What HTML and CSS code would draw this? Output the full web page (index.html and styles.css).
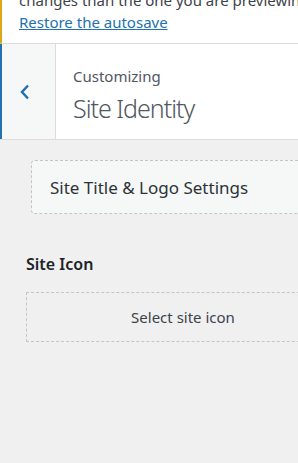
FILE: index.html
```html
<!DOCTYPE html>
<html>
<head>
<meta charset="utf-8">
<link rel="stylesheet" href="styles.css">
</head>
<body>
<div class="pane">
  <div class="notice">
    <p class="notice-text">changes than the one you are previewing.</p>
    <a class="notice-link" href="#">Restore the autosave</a>
  </div>
  <div class="header">
    <button class="back" aria-label="Back">
      <svg width="12" height="16" viewBox="0 0 12 16"><path d="M9 1.5 L3 8 L9 14.5" fill="none" stroke="#2271b1" stroke-width="2.5"/></svg>
    </button>
    <div class="title-wrap">
      <span class="eyebrow">Customizing</span>
      <h3 class="title">Site Identity</h3>
    </div>
  </div>
  <div class="content">
    <button class="logo-btn">Site Title &amp; Logo Settings</button>
    <h4 class="section-label">Site Icon</h4>
    <button class="select-btn">Select site icon</button>
  </div>
</div>
</body>
</html>
```
FILE: styles.css
```css
html, body {
  margin: 0;
  padding: 0;
  background: #f0f0f1;
  overflow: hidden;
}
body {
  width: 298px;
  height: 463px;
  font-family: "Noto Sans", "Open Sans", sans-serif;
}
.pane {
  width: 340px;
}
.notice {
  background: #fff;
  border-left: 2px solid #dba617;
  border-bottom: 1px solid #dcdcde;
  padding: 0 0 0 17px;
  margin-top: -10px;
  height: 54px;
  box-sizing: border-box;
  overflow: hidden;
}
.notice-text {
  margin: 0;
  font-size: 15px;
  line-height: 21px;
  color: #3c434a;
  white-space: nowrap;
}
.notice-link {
  display: inline-block;
  font-size: 15px;
  line-height: 21px;
  color: #2271b1;
  text-decoration: underline;
}
.header {
  display: flex;
  background: #fff;
  border-bottom: 1px solid #dcdcde;
  height: 96px;
  box-sizing: border-box;
}
.back {
  width: 56px;
  background: #f6f7f7;
  border: none;
  border-left: 2px solid #2271b1;
  border-right: 1px solid #dcdcde;
  padding: 0 7px 0 0;
  display: flex;
  align-items: center;
  justify-content: center;
}
.title-wrap {
  display: flex;
  flex-direction: column;
  padding: 22px 0 0 17px;
}
.eyebrow {
  font-size: 15px;
  line-height: 20px;
  color: #50575e;
}
.title {
  margin: 7px 0 0;
  font-size: 25px;
  font-weight: 300;
  letter-spacing: -1px;
  line-height: 30px;
  color: #50575e;
}
.content {
  display: flex;
  flex-direction: column;
  align-items: flex-start;
  padding: 20px 0 0 26px;
}
.logo-btn {
  margin-left: 5px;
  width: 300px;
  height: 54px;
  box-sizing: border-box;
  text-align: left;
  padding: 0 0 0 18px;
  background: #f6f7f7;
  border: 1px dashed #c3c4c7;
  border-radius: 4px;
  font-family: inherit;
  font-size: 17px;
  color: #2c3338;
}
.section-label {
  margin: 39px 0 0;
  font-size: 16px;
  font-weight: 600;
  line-height: 22px;
  color: #1d2327;
}
.select-btn {
  margin-top: 17px;
  width: 314px;
  height: 50px;
  box-sizing: border-box;
  background: transparent;
  border: 1px dashed #c3c4c7;
  font-family: inherit;
  font-size: 15px;
  color: #3c434a;
}
```
